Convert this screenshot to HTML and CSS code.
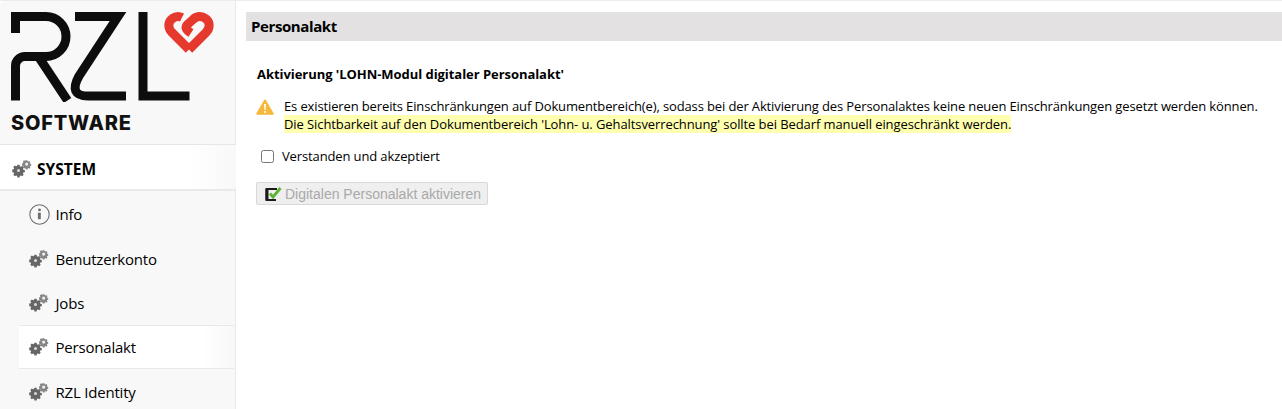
FILE: index.html
```html
<!DOCTYPE html>
<html lang="de">
<head>
  <meta charset="UTF-8" />
  <title>Personalakt</title>
  <link rel="stylesheet" href="styles.css">
</head>
<body>
  <svg class="defs" width="0" height="0" aria-hidden="true">
    <defs>
      <g id="gear">
        <path d="M5.400 4.800h2.200l.3 1.500 1 .4 1.300-.8 1.500 1.500-.8 1.300.4 1 1.500.3v2.200l-1.500.3-.4 1 .8 1.300-1.500 1.500-1.300-.8-1 .4-.3 1.500H5.400l-.3-1.500-1-.4-1.300.8-1.500-1.500.8-1.300-.4-1-1.500-.3V9.500l1.500-.3.4-1-.8-1.300 1.500-1.500 1.300.8 1-.4z" fill="#666"/>
        <circle cx="6.500" cy="10.600" r="1.500" fill="#ddd"/>
        <path d="M13.800 .3h1.700l.2 1 .7.3.9-.6 1.200 1.200-.6.900.3.7 1 .2v1.700l-1 .2-.3.7.6.9-1.200 1.200-.9-.6-.7.3-.2 1h-1.700l-.2-1-.7-.3-.9.6-1.200-1.200.6-.9-.3-.7-1-.2V3.200l1-.2.3-.7-.6-.9L12 .2l.9.6.7-.3z" fill="#858585"/>
        <circle cx="14.650" cy="4.050" r="1.600" fill="#eee"/>
      </g>
    </defs>
  </svg>

  <div class="app">
    <aside class="sidebar">
      <div class="brand">
        <svg class="logo" width="205" height="92" viewBox="11 10 205 92">
          <g fill="none" stroke="#0d0d0d" stroke-width="9">
            <path d="M15.500 33V16.500H46a20 20 0 0 1 0 40H25a9.500 9.500 0 0 0-9.500 9.500V100.500"/>
            <path d="M38 56l29.500 44.500"/>
            <path d="M75 16.500H118L79 76Q68 96 88 96H126"/>
            <path d="M143 12V96H189.500"/>
          </g>
          <g fill="none" stroke="#e5392d" stroke-width="9">
            <path d="M189 49.500L172 32.500C167.500 28 168 21.500 172.500 18.500C175.500 16.300 179 16 182 17.500"/>
            <path d="M189 49.500L206 32.500C210.500 28 210 21.500 205.500 18.500C201.500 15.500 196.500 16 193 19.500L187.500 24.500C185 27 185.500 29.500 191 33"/>
          </g>
        </svg>
        <div class="brand-name">SOFTWARE</div>
      </div>

      <div class="section">
        <svg class="gear" width="20" height="18"><use href="#gear"/></svg>
        <span>SYSTEM</span>
      </div>

      <nav class="menu">
        <a class="menu-item">
          <svg class="info" width="21" height="21" viewBox="0 0 21 21">
            <circle cx="10.500" cy="10.500" r="9.700" fill="none" stroke="#6e6e6e" stroke-width="1.100"/>
            <circle cx="10.500" cy="5.900" r="1.400" fill="#6e6e6e"/>
            <path d="M8.900 8.700h2.900v6.500h-2.900z" fill="#6e6e6e"/>
          </svg>
          Info
        </a>
        <a class="menu-item"><svg class="gear" width="20" height="18"><use href="#gear"/></svg>Benutzerkonto</a>
        <a class="menu-item"><svg class="gear" width="20" height="18"><use href="#gear"/></svg>Jobs</a>
        <a class="menu-item active"><svg class="gear" width="20" height="18"><use href="#gear"/></svg>Personalakt</a>
        <a class="menu-item"><svg class="gear" width="20" height="18"><use href="#gear"/></svg>RZL Identity</a>
      </nav>
    </aside>

    <main class="main">
      <h1 class="page-title">Personalakt</h1>
      <div class="content">
        <h2 class="sub-title">Aktivierung 'LOHN-Modul digitaler Personalakt'</h2>

        <div class="notice">
          <svg class="warn" width="18" height="16" viewBox="0 0 18 16">
            <path d="M9 .6c.5 0 .9.300 1.200.8l7.400 12.800c.5.800-.1 1.600-1 1.600H1.400c-.9 0-1.500-.8-1-1.600L7.800 1.400C8.100.9 8.500.6 9 .6z" fill="#f5b83d"/>
            <path d="M8.100 5h1.800l-.3 6H8.400z" fill="#fff"/>
            <circle cx="9" cy="12.900" r="1" fill="#fff"/>
          </svg>
          <p>Es existieren bereits Einschränkungen auf Dokumentbereich(e), sodass bei der Aktivierung des Personalaktes keine neuen Einschränkungen gesetzt werden können.<br><mark>Die Sichtbarkeit auf den Dokumentbereich 'Lohn- u. Gehaltsverrechnung' sollte bei Bedarf manuell eingeschränkt werden.</mark></p>
        </div>

        <label class="accept"><input type="checkbox"> Verstanden und akzeptiert</label>

        <button class="activate" disabled>
          <svg width="18" height="16" viewBox="0 0 18 16">
            <path d="M13 3H2.500V14H12" fill="none" stroke="#1a1a1a" stroke-width="2"/>
            <path d="M3 3V14" fill="none" stroke="#1a1a1a" stroke-width="3"/>
            <path d="M6 7.500l3 3.500L16.500 2" fill="none" stroke="#5cb531" stroke-width="2.800"/>
          </svg>
          Digitalen Personalakt aktivieren
        </button>
      </div>
    </main>
  </div>
</body>
</html>
```

FILE: styles.css
```css
* {
  box-sizing: border-box;
}

html, body {
  height: 100%;
}

body {
  margin: 0;
  overflow: hidden;
  background: #fff;
  color: #000;
  font-family: "Open Sans", "Noto Sans", sans-serif;
  font-size: 13px;
}

.defs {
  position: absolute;
}

.app {
  display: flex;
  height: 100%;
  border-top: 1px solid #ececec;
}

/* Navigation links */
.sidebar {
  flex: 0 0 236px;
  background: #f8f8f8;
  border-right: 1px solid #e8e8e8;
  border-top-left-radius: 6px;
}

.brand {
  height: 143px;
  padding: 9px 0 0 11px;
}

.logo {
  display: block;
}

.brand-name {
  margin-top: 9px;
  font-family: "Inter", "Liberation Sans", sans-serif;
  font-size: 20px;
  font-weight: 800;
  line-height: 24px;
  letter-spacing: 0.8px;
  color: #111;
}

.section {
  display: flex;
  align-items: center;
  gap: 5px;
  height: 47px;
  padding: 3px 0 0 12px;
  margin-right: -1px;
  background: linear-gradient(to right, #fff 80%, #f8f8f8);
  border-top: 1px solid #e6e6e6;
  border-bottom: 2px solid #e9e9e9;
  font-size: 15.500px;
  font-weight: 700;
}

.menu-item {
  display: flex;
  align-items: center;
  gap: 6.500px;
  height: 44.500px;
  padding: 2px 0 0 10px;
  margin: 0 1px 0 19px;
  font-size: 15px;
  letter-spacing: -0.2px;
}

.menu-item .info {
  margin-right: -1px;
}

.menu-item.active {
  height: 44px;
  margin-bottom: 0.500px;
  padding-top: 1px;
  background: linear-gradient(to right, #fff 85%, #f8f8f8);
  border-top: 1px solid #e9e9e9;
  border-bottom: 1px solid #e9e9e9;
}

/* Hauptbereich */
.main {
  flex: 1;
  padding: 11px 0 0 10px;
}

.page-title {
  margin: 0;
  height: 29px;
  padding-left: 5px;
  background: #e3e1e2;
  font-size: 15px;
  font-weight: 700;
  line-height: 29px;
  letter-spacing: -0.4px;
}

.content {
  padding: 0 0 0 10px;
}

.sub-title {
  margin: 24px 0 0 1px;
  font-size: 13px;
  font-weight: 700;
  line-height: 18px;
  letter-spacing: -0.05px;
}

.notice {
  display: flex;
  gap: 10px;
  margin-top: 14px;
}

.warn {
  flex: none;
  margin-top: 2px;
}

.notice p {
  margin: 0;
  line-height: 18px;
  letter-spacing: -0.127px;
}

mark {
  background: #ffffb0;
  color: inherit;
  letter-spacing: -0.09px;
}

.accept {
  display: flex;
  align-items: center;
  margin-top: 14px;
  height: 18px;
  letter-spacing: -0.127px;
}

.accept input {
  width: 13px;
  height: 13px;
  margin: 0 8px 0 5px;
}

.activate {
  display: flex;
  align-items: center;
  gap: 3px;
  width: 232px;
  height: 23px;
  margin-top: 17px;
  padding: 0 0 0 7px;
  background: #efefef;
  border: 1px solid #d9d9d9;
  border-radius: 2px;
  color: #a9a9a9;
  font-family: "Liberation Sans", Arial, sans-serif;
  font-size: 14px;
}
```
